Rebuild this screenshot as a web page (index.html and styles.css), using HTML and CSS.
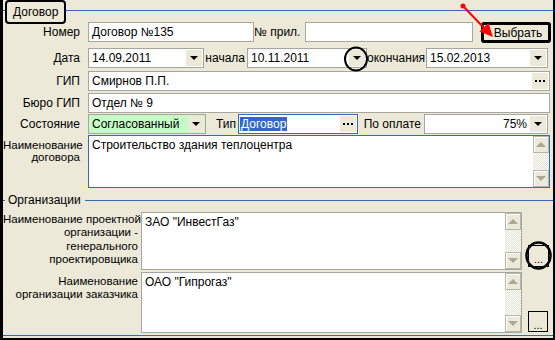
FILE: index.html
```html
<!DOCTYPE html>
<html lang="ru">
<head>
  <meta charset="UTF-8">
  <meta name="viewport" content="width=device-width, initial-scale=1.0">
  <title>Договор</title>
  <link rel="stylesheet" href="styles.css">
</head>
<body>

<div class="window">
  <div class="caption">
    <span class="cap-line cap-short"></span>
    <span class="cap-title boxed">Договор</span>
    <span class="cap-line"></span>
  </div>

  <div class="row row-num">
    <span class="lbl">Номер</span>
    <div class="field w-num">Договор №135</div>
    <span class="lbl-in w-pril-lbl">№ прил.</span>
    <div class="field w-pril"></div>
    <button class="btn-select">Выбрать</button>
  </div>

  <div class="row row-date">
    <span class="lbl">Дата</span>
    <div class="field combo w-date"><span class="val">14.09.2011</span><span class="drop"></span></div>
    <span class="lbl-in w-start-lbl">начала</span>
    <div class="field combo w-start"><span class="val">10.11.2011</span><span class="drop"></span></div>
    <span class="lbl-in w-end-lbl">окончания</span>
    <div class="field combo w-end"><span class="val">15.02.2013</span><span class="drop"></span></div>
  </div>

  <div class="row row-gip">
    <span class="lbl">ГИП</span>
    <div class="field combo w-full"><span class="val">Смирнов П.П.</span><span class="dots"><i></i><i></i><i></i></span></div>
  </div>

  <div class="row row-buro">
    <span class="lbl">Бюро ГИП</span>
    <div class="field w-full">Отдел № 9</div>
  </div>

  <div class="row row-state">
    <span class="lbl">Состояние</span>
    <div class="field combo green w-state"><span class="val">Согласованный</span><span class="drop"></span></div>
    <span class="lbl-in w-type-lbl">Тип</span>
    <div class="field combo focus w-type"><span class="val"><span class="sel">Договор</span></span><span class="dots"><i></i><i></i><i></i></span></div>
    <span class="lbl-in w-pay-lbl">По оплате</span>
    <div class="field combo w-pay"><span class="val right">75%</span><span class="drop"></span></div>
  </div>

  <div class="row row-name">
    <span class="lbl multi">Наименование<br>договора</span>
    <div class="memo focus w-full">
      <div class="memo-text">Строительство здания теплоцентра</div>
      <div class="scroll">
        <span class="sb-btn sb-up"></span>
        <span class="sb-track"></span>
        <span class="sb-btn sb-down"></span>
      </div>
    </div>
  </div>

  <div class="caption caption-org">
    <span class="cap-line cap-short"></span>
    <span class="cap-title">Организации</span>
    <span class="cap-line"></span>
  </div>

  <div class="row org-row org-first">
    <span class="lbl-org">Наименование проектной<br>организации -<br>генерального<br>проектировщика</span>
    <div class="memo w-org">
      <div class="memo-text">ЗАО "ИнвестГаз"</div>
      <div class="scroll">
        <span class="sb-btn sb-up"></span>
        <span class="sb-track"></span>
        <span class="sb-btn sb-down"></span>
      </div>
    </div>
    <button class="btn-more">...</button>
  </div>

  <div class="row org-row org-second">
    <span class="lbl-org">Наименование<br>организации заказчика</span>
    <div class="memo w-org">
      <div class="memo-text">ОАО "Гипрогаз"</div>
      <div class="scroll">
        <span class="sb-btn sb-up"></span>
        <span class="sb-track"></span>
        <span class="sb-btn sb-down"></span>
      </div>
    </div>
    <button class="btn-more">...</button>
  </div>

  <div class="bottom-line"></div>
</div>

<!-- пометки поверх формы -->
<svg class="marks" width="555" height="340" viewBox="0 0 555 340">
  <line x1="463" y1="6" x2="485" y2="29" stroke="#f00" stroke-width="2"/>
  <circle cx="463" cy="6" r="2.5" fill="#f00"/>
  <polygon points="493,37 479.5,31.5 488.5,23" fill="#f00"/>
  <ellipse cx="356" cy="59" rx="11" ry="11.5" fill="none" stroke="#000" stroke-width="2"/>
  <ellipse cx="538.5" cy="255.5" rx="12" ry="13" fill="none" stroke="#000" stroke-width="2.5"/>
</svg>

</body>
</html>
```

FILE: styles.css
```css
body {
  margin: 0;
  background-color: #000;
  font-family: "Liberation Sans", Arial, sans-serif;
  font-size: 11px;
  color: #000;
  position: relative;
  width: 555px;
  height: 340px;
  overflow: hidden;
}

.window {
  width: 550px;
  height: 338px;
  margin-left: 3px;
  background-color: #ece9d8;
  display: flex;
  flex-direction: column;
}

/* заголовки групп */
.caption {
  display: flex;
  align-items: flex-start;
  height: 22px;
}

.cap-line {
  flex: 1;
  height: 1px;
  margin-top: 10px;
  background-color: #316ac5;
}

.cap-line.cap-short {
  flex: none;
  width: 2px;
}

.cap-title {
  height: 20px;
  line-height: 20px;
  padding: 0 5px 0 4px;
  margin-right: 1px;
  font-size: 12px;
}

.cap-title.boxed {
  border: 2px solid #000;
  border-radius: 4px;
  padding: 0 6px 0 6px;
  margin-right: 0;
}

.caption-org {
  height: 14px;
  margin-top: 5px;
}

.caption-org .cap-line {
  margin-top: 7px;
}

.caption-org .cap-title {
  height: 14px;
  line-height: 14px;
  padding: 0 3px 0 3px;
}

/* строки формы */
.row {
  display: flex;
  align-items: center;
  height: 20px;
  flex: none;
}

.row-date { margin-top: 6px; }
.row-gip { margin-top: 3px; }
.row-buro { margin-top: 2px; }
.row-state { margin-top: 1px; }
.row-name { margin-top: 1px; height: 53px; align-items: flex-start; }

.lbl {
  width: 77px;
  margin-right: 8px;
  text-align: right;
  white-space: nowrap;
  font-size: 12px;
}

.lbl.multi {
  font-size: 11.5px;
  line-height: 12px;
  padding-top: 4px;
}

.lbl-in {
  text-align: right;
  white-space: nowrap;
  flex: none;
  font-size: 12px;
}

.w-pril-lbl { width: 46px; margin-right: 5px; }
.w-start-lbl { width: 41px; margin-right: 2px; }
.w-end-lbl { width: 57px; margin-right: 2px; }
.w-type-lbl { width: 30px; margin-right: 2px; }
.w-pay-lbl { width: 63px; margin-right: 3px; }

.field {
  box-sizing: border-box;
  height: 20px;
  border: 1px solid #a7a69e;
  background-color: #fff;
  padding-left: 3px;
  display: flex;
  align-items: center;
  white-space: nowrap;
  overflow: hidden;
  flex: none;
  font-size: 12px;
}

.field.focus {
  border-color: #316ac5;
  padding-left: 1px;
}

.field.green {
  background-color: #c6fbc6;
}

.w-num { width: 166px; }
.w-pril { width: 168px; }
.w-date { width: 116px; }
.w-start { width: 120px; }
.w-end { width: 122px; }
.w-full { width: 462px; }
.w-state { width: 118px; }
.w-type { width: 120px; }
.w-pay { width: 124px; }

.combo {
  padding-right: 1px;
}

.combo .val {
  flex: 1;
  overflow: hidden;
}

.combo .val.right {
  text-align: right;
  padding-right: 3px;
}

.sel {
  background-color: #316ac5;
  color: #fff;
  padding: 1px 1px 2px 1px;
}

.drop, .dots {
  width: 16px;
  height: 16px;
  background-color: #ece9d8;
  display: flex;
  align-items: center;
  justify-content: center;
  flex: none;
}

.drop::after {
  content: "";
  border-left: 4px solid transparent;
  border-right: 4px solid transparent;
  border-top: 4px solid #000;
}

.dots {
  gap: 2px;
}

.dots i {
  width: 2px;
  height: 2px;
  background-color: #000;
}

.btn-select {
  box-sizing: border-box;
  width: 70px;
  height: 21px;
  margin-left: 8px;
  margin-top: 1px;
  border: 3px solid #000;
  border-radius: 3px;
  background-color: #ece9d8;
  font-family: inherit;
  font-size: 12px;
  padding: 0 0 0 4px;
}

/* многострочные поля */
.memo {
  box-sizing: border-box;
  height: 100%;
  border: 1px solid #a7a69e;
  background-color: #fff;
  display: flex;
  flex: none;
}

.memo.focus {
  border-color: #316ac5;
}

.memo-text {
  flex: 1;
  padding: 2px 3px;
  line-height: 14px;
  font-size: 12px;
}

.scroll {
  width: 16px;
  display: flex;
  flex-direction: column;
}

.sb-btn {
  box-sizing: border-box;
  height: 17px;
  border: 1px solid #b9b7ab;
  box-shadow: inset 1px 1px #fff;
  background-color: #ece9d8;
  display: flex;
  align-items: center;
  justify-content: center;
}

.sb-up::after {
  content: "";
  border-left: 5px solid transparent;
  border-right: 5px solid transparent;
  border-bottom: 5px solid #aca899;
}

.sb-down::after {
  content: "";
  border-left: 5px solid transparent;
  border-right: 5px solid transparent;
  border-top: 5px solid #aca899;
}

.sb-track {
  flex: 1;
  background: repeating-conic-gradient(#fff 0 25%, #e4e1d3 0 50%) 0 0 / 2px 2px;
}

/* организации */
.org-row {
  align-items: flex-start;
}

.org-first {
  margin-top: 5px;
  height: 58px;
}

.org-second {
  margin-top: 2px;
  height: 61px;
}

.lbl-org {
  width: 135px;
  margin-right: 3px;
  text-align: right;
  line-height: 13.3px;
  white-space: nowrap;
  flex: none;
  font-size: 11.5px;
}

.org-first .lbl-org { padding-top: 1px; }
.org-second .lbl-org { padding-top: 3px; line-height: 13px; }

.w-org { width: 381px; }

.btn-more {
  box-sizing: border-box;
  width: 21px;
  height: 22px;
  margin-left: 6px;
  align-self: flex-end;
  border: 1px solid #000;
  background-color: #ece9d8;
  font-family: inherit;
  font-size: 11px;
  line-height: 10px;
  padding: 6px 0 0 0;
}

.org-first .btn-more { margin-bottom: 3px; }
.org-second .btn-more { margin-bottom: 1px; width: 20px; height: 21px; }

.bottom-line {
  height: 1px;
  margin-top: 2px;
  background-color: #316ac5;
  flex: none;
}

.marks {
  position: absolute;
  left: 0;
  top: 0;
  pointer-events: none;
}
```
